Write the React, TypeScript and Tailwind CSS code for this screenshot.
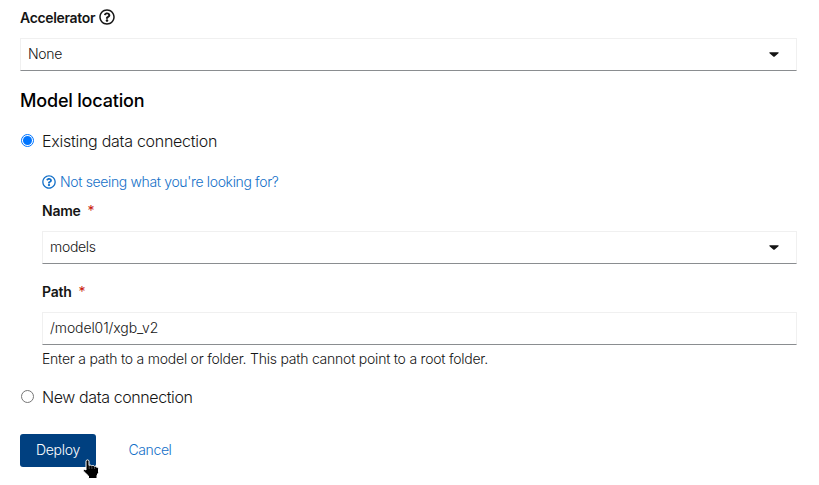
import type { ReactNode } from 'react';
import { FaCaretDown, FaRegQuestionCircle } from 'react-icons/fa';

function Select({ value }: { value: string }) {
  return (
    <button
      type="button"
      className="flex h-[33px] w-full items-center justify-between border border-[#f0f0f0] border-b-[#8a8d90] bg-white pb-[2px] pl-[7px] pr-[17px] text-left text-[14px] leading-[21px] tracking-[-0.3px]"
    >
      <span>{value}</span>
      <FaCaretDown className="h-[14px] w-[10px]" preserveAspectRatio="none" />
    </button>
  );
}

function FieldLabel({ children }: { children: ReactNode }) {
  return (
    <div className="flex h-[21px] items-center text-[14px] font-semibold leading-[21px] tracking-[-0.25px]">
      <span>{children}</span>
      <span className="ml-[7px] text-[14px] font-normal text-[#c9190b]">*</span>
    </div>
  );
}

function Radio({ checked, label }: { checked?: boolean; label: string }) {
  return (
    <label className="flex h-6 items-center pl-px text-[16px] leading-6">
      <span
        className={
          checked
            ? 'mr-2 flex size-[13px] -translate-y-px items-center justify-center rounded-full border border-[#0075ff] bg-white'
            : 'mr-2 size-[13px] -translate-y-px rounded-full border border-[#767676] bg-white'
        }
      >
        {checked && <span className="size-[9px] rounded-full bg-[#0075ff]" />}
      </span>
      <span className={checked ? 'tracking-[-0.27px]' : 'tracking-[-0.4px]'}>{label}</span>
    </label>
  );
}

function HandCursor() {
  return (
    <svg className="absolute left-[62px] top-[25px] h-[21px] w-[18px]" viewBox="0 0 18 21">
      <path
        d="M4 2.200C4 .4 7 .4 7 2.200V6.500C7.700 5.800 9.300 6 9.700 6.900 10.400 6.200 12 6.400 12.500 7.400 13.200 6.900 14.300 7.200 14.500 8.200 15.700 7.900 16.500 8.600 16.500 9.800V13.500L15 16.500V19.500H6.500V17L1.800 12.500C.6 11.200 1.800 9.500 4 11Z"
        fill="#000"
        stroke="#fff"
        strokeWidth="1"
      />
      <path d="M7.200 7v3M9.900 7.500v2.500M12.600 8v2" stroke="#999" strokeWidth=".5" />
    </svg>
  );
}

export default function App() {
  return (
    <div className="h-[485px] w-[819px] overflow-hidden bg-white pl-5 pr-[22px] pt-[7px] font-['Inter',sans-serif] font-[350] text-[#151515]">
      <div className="flex h-[21px] items-center gap-1 text-[14px] font-semibold leading-[21px] tracking-[-0.33px]">
        <span>Accelerator</span>
        <FaRegQuestionCircle className="size-4 -translate-y-px" />
      </div>
      <div className="mt-[10px]">
        <Select value="None" />
      </div>
      <h2 className="mt-[18px] h-6 text-[18px] font-[550] leading-6 tracking-[-0.18px] text-black">Model location</h2>
      <div className="mt-4">
        <Radio checked label="Existing data connection" />
      </div>
      <div className="pl-[22px] pt-[18px]">
        <div className="flex h-[21px] items-center gap-1 text-[14px] leading-[21px] tracking-[-0.35px] text-[#1470c8]">
          <FaRegQuestionCircle className="size-[14px]" />
          <span>Not seeing what you're looking for?</span>
        </div>
        <div className="mt-2">
          <FieldLabel>Name</FieldLabel>
        </div>
        <div className="mt-[10px]">
          <Select value="models" />
        </div>
        <div className="mt-[17px]">
          <FieldLabel>Path</FieldLabel>
        </div>
        <div className="mt-[10px] flex h-[33px] items-center border border-[#f0f0f0] border-b-[#8a8d90] pb-[2px] pl-[7px] text-[14px] leading-[21px] tracking-[-0.1px]">
          /model01/xgb_v2
        </div>
        <p className="mt-[3px] h-[21px] text-[14px] leading-[21px] tracking-[-0.23px]">
          Enter a path to a model or folder. This path cannot point to a root folder.
        </p>
      </div>
      <div className="mt-4">
        <Radio label="New data connection" />
      </div>
      <div className="relative mt-[25px] flex h-[33px] gap-4">
        <button type="button" className="w-[76px] rounded-[3px] bg-[#004080] pb-[2px] text-[14px] tracking-[-0.25px] text-white">
          Deploy
        </button>
        <button type="button" className="w-[76px] pb-[2px] text-[14px] tracking-[-0.4px] text-[#1470c8]">
          Cancel
        </button>
        <HandCursor />
      </div>
    </div>
  );
}
